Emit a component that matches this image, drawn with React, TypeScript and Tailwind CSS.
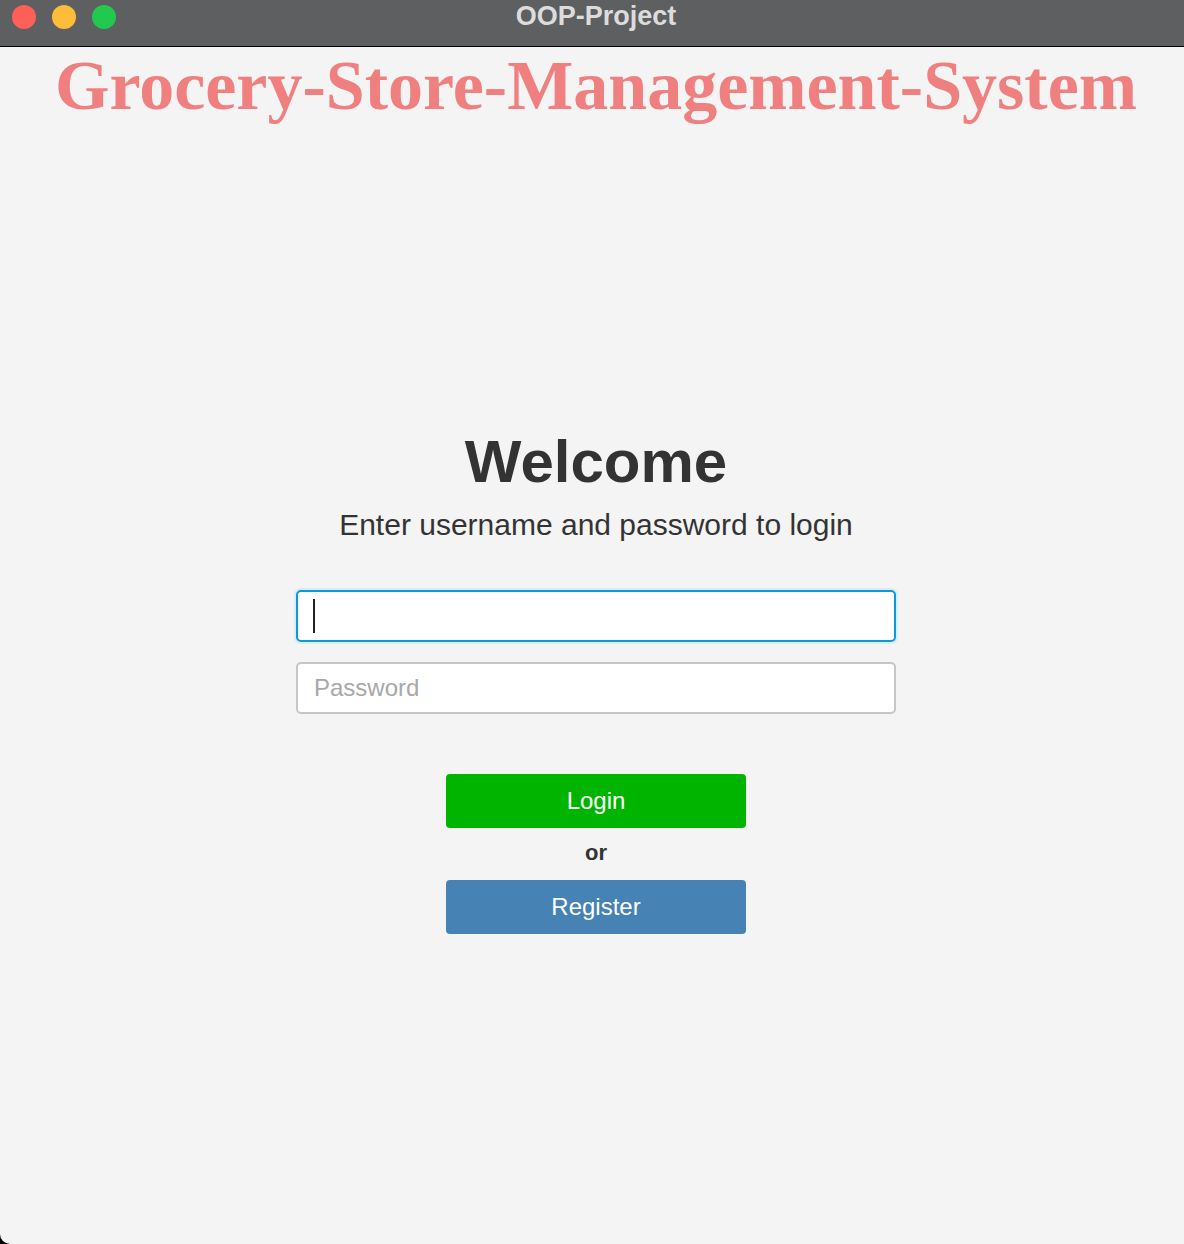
export default function App() {
  return (
    <div className="w-[1184px] h-[1244px] bg-black overflow-hidden">
      <div className="w-full h-full bg-[#f4f4f4] rounded-bl-[10px] flex flex-col pl-[8px]">
        {/* title bar */}
        <div className="relative -ml-[8px] pl-[8px] h-[47px] bg-[#5e5f61] border-b border-black flex items-center justify-center shrink-0">
          <div className="absolute left-[12px] top-[5px] flex gap-[16px]">
            <span className="w-[24px] h-[24px] rounded-full bg-[#ff5f57]" />
            <span className="w-[24px] h-[24px] rounded-full bg-[#febc39]" />
            <span className="w-[24px] h-[24px] rounded-full bg-[#22c94f]" />
          </div>
          <span className="-mt-[13px] text-[27px] font-bold text-[#dcdcdc] font-['Liberation_Sans',Arial,sans-serif]">
            OOP-Project
          </span>
        </div>

        <h1 className="mt-[4px] text-center text-[70px] leading-none font-bold text-[#f08080] font-['Liberation_Serif','Times_New_Roman',serif]">
          Grocery-Store-Management-System
        </h1>

        <div className="flex flex-col items-center font-['Liberation_Sans',Arial,sans-serif] text-[#333333]">
          <h2 className="mt-[311px] text-[60px] leading-none font-bold">Welcome</h2>
          <p className="mt-[18px] text-[30px] leading-none">Enter username and password to login</p>

          <div className="mt-[50px] w-[600px] h-[52px] rounded-[5px] border-2 border-[#0a9ad8] bg-white shadow-[0_0_0_2px_#d6ecf7] flex items-center pl-[15px]">
            <span className="w-[2px] h-[34px] bg-[#222]" />
          </div>
          <input
            placeholder="Password"
            className="mt-[20px] w-[600px] h-[52px] rounded-[5px] border-2 border-[#c6c6c6] bg-white px-[16px] text-[24px] text-[#333] placeholder:text-[#a8a8a8] outline-none"
          />

          <button className="mt-[60px] w-[300px] h-[54px] rounded-[4px] bg-[#00b400] text-white text-[24px]">
            Login
          </button>
          <span className="mt-[14px] text-[22px] font-bold leading-none">or</span>
          <button className="mt-[16px] w-[300px] h-[54px] rounded-[4px] bg-[#4682b4] text-white text-[24px]">
            Register
          </button>
        </div>
      </div>
    </div>
  );
}
